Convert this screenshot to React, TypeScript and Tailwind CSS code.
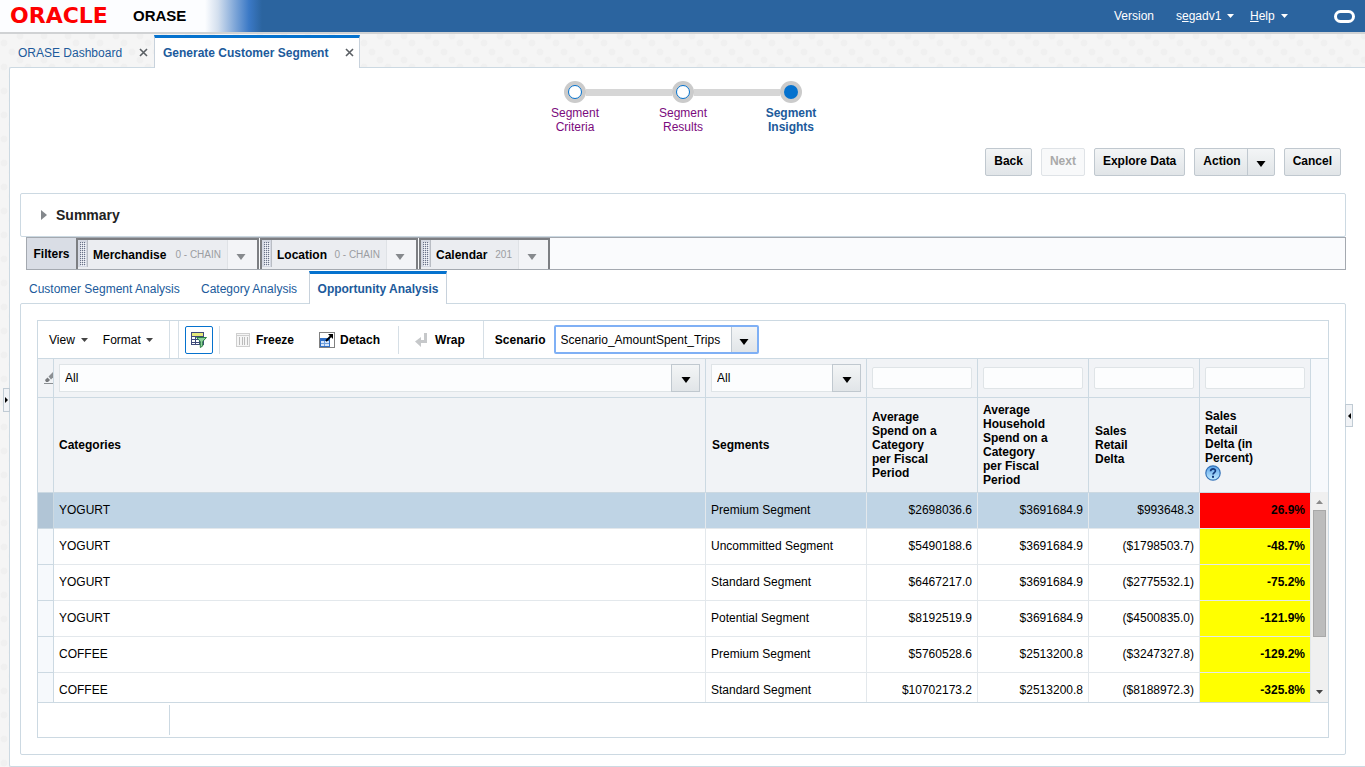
import React from 'react';

interface Row {
  category: string;
  segment: string;
  spend: string;
  household: string;
  delta: string;
  percent: string;
}

const rows: Row[] = [
  { category: 'YOGURT', segment: 'Premium Segment', spend: '$2698036.6', household: '$3691684.9', delta: '$993648.3', percent: '26.9%' },
  { category: 'YOGURT', segment: 'Uncommitted Segment', spend: '$5490188.6', household: '$3691684.9', delta: '($1798503.7)', percent: '-48.7%' },
  { category: 'YOGURT', segment: 'Standard Segment', spend: '$6467217.0', household: '$3691684.9', delta: '($2775532.1)', percent: '-75.2%' },
  { category: 'YOGURT', segment: 'Potential Segment', spend: '$8192519.9', household: '$3691684.9', delta: '($4500835.0)', percent: '-121.9%' },
  { category: 'COFFEE', segment: 'Premium Segment', spend: '$5760528.6', household: '$2513200.8', delta: '($3247327.8)', percent: '-129.2%' },
  { category: 'COFFEE', segment: 'Standard Segment', spend: '$10702173.2', household: '$2513200.8', delta: '($8188972.3)', percent: '-325.8%' },
];

const Caret = ({ className = 'text-black' }: { className?: string }) => (
  <svg width="10" height="6" viewBox="0 0 10 6" className={className} aria-hidden="true">
    <path d="M.5 0h9L5 6z" fill="currentColor" />
  </svg>
);

const SmallCaret = ({ className = 'text-[#444]' }: { className?: string }) => (
  <svg width="7" height="4" viewBox="0 0 7 4" className={className} aria-hidden="true">
    <path d="M0 0h7L3.5 4z" fill="currentColor" />
  </svg>
);

const CloseIcon = () => (
  <svg width="9" height="9" viewBox="0 0 9 9" aria-hidden="true">
    <path d="M1 1l7 7M8 1L1 8" stroke="#5a5f64" strokeWidth="1.6" />
  </svg>
);

const TopBar = () => (
  <header className="flex h-[34px] items-center border-b-2 border-[#d0d2d4] bg-[linear-gradient(90deg,#fcfdff_0,#fcfdff_205px,#d3dfee_218px,#7ea6d8_235px,#3b79c6_249px,#2b649f_262px)]">
    <span className="w-[133px] pl-2.5 font-['DejaVu_Sans',sans-serif] text-[22px] leading-6 font-bold text-[#fe0000]">
      ORACLE
    </span>
    <h1 className="text-[15px] font-bold text-black">ORASE</h1>
    <nav className="ml-auto flex items-center pr-2.5 text-white">
      <a href="#version" className="w-[62px]">Version</a>
      <button className="flex w-[74px] items-center gap-1.5">
        <span>s<u>e</u>gadv1</span>
        <SmallCaret className="text-white" />
      </button>
      <button className="flex w-[84px] items-center gap-1.5">
        <span><u>H</u>elp</span>
        <SmallCaret className="text-white" />
      </button>
      <svg width="21" height="13" viewBox="0 0 21 13" aria-hidden="true">
        <rect x="1.5" y="1.5" width="18" height="10" rx="5" fill="none" stroke="#fff" strokeWidth="3" />
      </svg>
    </nav>
  </header>
);

const PageTabs = () => (
  <div className="relative z-10 -mb-px flex h-[34px] items-end pl-[9px] text-[#205a9b]">
    <div className="flex h-[33px] w-[145px] items-center justify-between pt-0.5 pr-1.5 pl-[9px]">
      <a href="#dashboard">ORASE Dashboard</a>
      <button aria-label="Close ORASE Dashboard"><CloseIcon /></button>
    </div>
    <div className="flex h-[33px] w-[206px] items-center justify-between border-x border-t-3 border-x-[#c8d2dc] border-t-[#0572ce] bg-white pr-[5px] pb-px pl-2 font-bold">
      <a href="#segment">Generate Customer Segment</a>
      <button aria-label="Close Generate Customer Segment"><CloseIcon /></button>
    </div>
  </div>
);

const steps = [
  { lines: ['Segment', 'Criteria'], current: false },
  { lines: ['Segment', 'Results'], current: false },
  { lines: ['Segment', 'Insights'], current: true },
];

const Train = () => (
  <ol className="flex justify-center">
    {steps.map((step, i) => (
      <li key={step.lines[1]} className="w-[108px]">
        <div className="flex items-center">
          <span className={i === 0 ? 'h-[7px] flex-1' : 'h-[7px] flex-1 bg-[#d6d6d6]'} />
          <span className="flex size-[22px] items-center justify-center rounded-full bg-[#cbcbcb]">
            <span
              className={
                step.current
                  ? 'size-3.5 rounded-full bg-[#0572ce]'
                  : 'size-3.5 rounded-full border border-[#0572ce] bg-white'
              }
            />
          </span>
          <span className={i === 2 ? 'h-[7px] flex-1' : 'h-[7px] flex-1 bg-[#d6d6d6]'} />
        </div>
        <a
          href="#step"
          className={
            step.current
              ? 'mt-[3px] block text-center leading-[14px] font-bold text-[#205a9b]'
              : 'mt-[3px] block text-center leading-[14px] text-[#7b0a7d]'
          }
        >
          {step.lines[0]}
          <br />
          {step.lines[1]}
        </a>
      </li>
    ))}
  </ol>
);

const buttonStyle =
  'h-7 rounded-xs border border-[#c0c8cf] bg-linear-to-b from-[#f3f5f6] to-[#e1e5e8] px-2 pb-0.5 font-bold text-black';

const ActionButtons = () => (
  <div className="mt-3.5 flex justify-end gap-[9px] pr-[5px]">
    <button className={buttonStyle}>Back</button>
    <button
      disabled
      className="h-7 rounded-xs border border-[#dfe3e7] bg-[#f8f9fa] px-2 pb-0.5 font-bold text-[#a9a9a9]"
    >
      Next
    </button>
    <button className={buttonStyle}>Explore Data</button>
    <div className="flex h-7 rounded-xs border border-[#c0c8cf] bg-linear-to-b from-[#f3f5f6] to-[#e1e5e8]">
      <button className="border-r border-[#c0c8cf] pr-1.5 pb-0.5 pl-2 font-bold text-black">Action</button>
      <button aria-label="More actions" className="flex w-[26px] items-center justify-center pt-1"><Caret /></button>
    </div>
    <button className={buttonStyle}>Cancel</button>
  </div>
);

const filters = [
  { name: 'Merchandise', value: '0 - CHAIN', width: 'w-[183px]' },
  { name: 'Location', value: '0 - CHAIN', width: 'w-[158px]' },
  { name: 'Calendar', value: '201', width: 'w-[131px]' },
];

const FilterBar = () => (
  <div className="ml-1.5 flex h-[33px] border border-[#a4a9b0] bg-[#fafbfd]">
    <span className="flex w-[49px] items-center justify-center bg-[#d9dde5] font-bold text-black">Filters</span>
    {filters.map((f) => (
      <div
        key={f.name}
        className={`${f.width} mr-px flex border-t-2 border-r-2 border-l-2 border-[#7c7e82] bg-[#ebedf1]`}
      >
        <span className="mr-[5px] flex h-[27px] w-[10px] shrink-0 items-center justify-center border-r border-[#b9bdc4] bg-[#d5d9e3]">
          <svg width="6" height="24" aria-hidden="true">
            <defs>
              <pattern id={`grip-${f.name}`} width="2" height="2" patternUnits="userSpaceOnUse">
                <rect width="1" height="1" fill="#6b7388" />
                <rect x="1" y="1" width="1" height="1" fill="#f4f6fa" />
              </pattern>
            </defs>
            <rect width="6" height="24" fill={`url(#grip-${f.name})`} />
          </svg>
        </span>
        <span className="flex items-center text-[12px] font-bold text-black">{f.name}</span>
        <span className="ml-auto flex items-center pr-1.5 text-[10px] text-[#9b9da1]">{f.value}</span>
        <button
          aria-label={`Choose ${f.name}`}
          className="flex w-[30px] shrink-0 items-center justify-center border-l border-[#dfe2e6] bg-[#f3f4f7] pt-1 pr-1"
        >
          <Caret className="text-[#86898d]" />
        </button>
      </div>
    ))}
  </div>
);

const AnalysisTabs = () => (
  <div className="relative z-10 -mb-px flex h-[34px] items-end text-[#205a9b]">
    <a href="#customer" className="flex h-[31px] w-[172px] items-center pl-[9px]">Customer Segment Analysis</a>
    <a href="#category" className="flex h-[31px] w-[117px] items-center pl-[9px]">Category Analysis</a>
    <a
      href="#opportunity"
      className="flex h-[33px] w-[138px] items-center justify-center border-x border-t-3 border-x-[#c8d2dc] border-t-[#0572ce] bg-white font-bold"
    >
      Opportunity Analysis
    </a>
  </div>
);

const QueryIcon = () => (
  <svg width="16" height="16" viewBox="0 0 16 16" aria-hidden="true">
    <rect x=".5" y=".5" width="12" height="12" fill="#fff" stroke="#3f4a7a" />
    <rect x="1" y="1" width="11" height="3" fill="#e6e97a" />
    <path d="M1 4.5h11M1 7.5h11M1 10.5h11M4.5 4v9M8.500 4v9" stroke="#3f4a7a" />
    <path d="M5.500 5.500h10l-3.800 4v4.500l-2.400 1.500v-6z" fill="#8fd09b" stroke="#2c8044" />
  </svg>
);

const FreezeIcon = () => (
  <svg width="14" height="14" viewBox="0 0 14 14" aria-hidden="true">
    <rect x=".5" y=".5" width="13" height="13" fill="#f5f5f5" stroke="#cfcfcf" />
    <path d="M1 2.5h12" stroke="#cfcfcf" />
    <path d="M3.5 4v8M6.500 4v8M8.500 4v8M11.500 4v8" stroke="#bbb" />
  </svg>
);

const DetachIcon = () => (
  <svg width="16" height="16" viewBox="0 0 16 16" aria-hidden="true">
    <rect x=".5" y=".5" width="15" height="15" fill="none" stroke="#000" strokeDasharray="1 1" />
    <rect x="1.500" y="6.500" width="9" height="8" fill="#d7e6fa" stroke="#2f6fc6" />
    <path d="M2 8h8" stroke="#2f6fc6" strokeWidth="2" />
    <path d="M5.500 9v5M2 11.500h8" stroke="#6fa0de" />
    <path d="M7 9l5.500-5.500" stroke="#000" strokeWidth="1.800" />
    <path d="M9 2h5v5z" fill="#000" />
  </svg>
);

const WrapIcon = () => (
  <svg width="13" height="14" viewBox="0 0 13 14" aria-hidden="true">
    <path d="M9 0h3v10H6v4L0 8.500 6 4v3h3z" fill="#c6c8ca" />
  </svg>
);

const Toolbar = () => (
  <div className="flex h-[37px] items-center text-black">
    <div className="flex h-full w-[132px] items-center gap-[15px] border-r border-[#d6dfe6] pl-[11px]">
      <button className="flex items-center gap-1.5">View <SmallCaret /></button>
      <button className="flex items-center gap-[5px]">Format <SmallCaret /></button>
    </div>
    <div className="flex h-full flex-1 items-center">
      <span className="ml-2 h-full border-l border-[#d6dfe6]" />
      <button
        aria-label="Query by example"
        className="ml-1.5 flex size-7 items-center justify-center rounded-xs border border-[#0572ce]"
      >
        <QueryIcon />
      </button>
      <span className="ml-1.5 h-7 border-l border-[#d6dfe6]" />
      <button className="ml-4 flex items-center gap-1.5 font-bold"><FreezeIcon /> Freeze</button>
      <button className="ml-[25px] flex items-center gap-[5px] font-bold"><DetachIcon /> Detach</button>
      <span className="ml-[18px] h-7 border-l border-[#d6dfe6]" />
      <button className="ml-4 flex items-center gap-[7px] font-bold"><WrapIcon /> Wrap</button>
      <span className="ml-[18px] h-full border-l border-[#d6dfe6]" />
      <label htmlFor="scenario" className="ml-[11px] font-bold">Scenario</label>
      <div className="relative ml-2">
        <select
          id="scenario"
          className="block h-[29px] w-[205px] appearance-none rounded-xs border-2 border-[#7fb0f5] bg-white pr-7 pl-[5px]"
        >
          <option>Scenario_AmountSpent_Trips</option>
        </select>
        <span className="pointer-events-none absolute inset-y-0.5 right-0.5 flex w-[26px] items-center justify-center border-l border-[#c0c8cf] bg-linear-to-b from-[#f3f5f6] to-[#e1e5e8] pt-1">
          <Caret />
        </span>
      </div>
    </div>
  </div>
);

const FilterSelect = ({ label }: { label: string }) => (
  <div className="relative">
    <select
      aria-label={label}
      className="block h-7 w-full appearance-none border border-[#dfe4e7] bg-[#fcfdfe] pr-8 pl-[5px] font-normal"
    >
      <option>All</option>
    </select>
    <span className="pointer-events-none absolute inset-y-0 right-0 flex w-[29px] items-center justify-center border border-[#c0c8cf] bg-linear-to-b from-[#f3f5f6] to-[#e1e5e8] pt-1">
      <Caret />
    </span>
  </div>
);

const FilterInput = ({ label }: { label: string }) => (
  <input
    type="text"
    aria-label={label}
    className="block h-[22px] w-full rounded-xs border border-[#dfe4e7] bg-[#fcfdfe] px-1 font-normal"
  />
);

const EraserIcon = () => (
  <svg width="9" height="12" viewBox="0 0 9 12" className="ml-auto" aria-hidden="true">
    <path d="M0 11.500h9" stroke="#8b8f93" />
    <path d="M1 8l2.500-2.500L6 8l-2 2H2z" fill="#77797c" />
    <path d="M4.500 4.500L9 0v5.500L7 7.500z" fill="#8b8f93" />
  </svg>
);

const HelpIcon = () => (
  <svg width="16" height="16" viewBox="0 0 16 16" aria-hidden="true">
    <defs>
      <linearGradient id="help" x1="0" y1="0" x2="0" y2="1">
        <stop offset="0" stopColor="#5aa2ea" />
        <stop offset="1" stopColor="#c3ecff" />
      </linearGradient>
    </defs>
    <circle cx="8" cy="8" r="7.200" fill="url(#help)" stroke="#3673b8" strokeWidth="1.200" />
    <path d="M5.600 6.200C5.600 3 10.600 3.200 10.400 6 10.300 7.600 8 7.600 8 9.600" fill="none" stroke="#12397c" strokeWidth="1.700" />
    <rect x="7" y="10.800" width="2" height="2" fill="#12397c" />
  </svg>
);

const headCell = 'border-r border-b border-[#ccd9e2] px-[5px] text-left';
const textHead = 'border-r border-b border-[#ccd9e2] px-1.5 text-left';
const textCell = 'border-r border-b border-[#e3e8ec] pb-0.5 pl-[5px]';
const numberCell = 'border-r border-b border-[#e3e8ec] pr-[5px] pb-0.5 text-right';

const DataTable = () => (
  <div className="flex h-[345px] overflow-hidden border-y border-[#ccd9e2]">
    <div className="min-w-0 flex-1 overflow-hidden">
      <table className="w-full table-fixed border-separate border-spacing-0 text-black">
        <colgroup>
          <col className="w-4" />
          <col />
          <col className="w-[161px]" />
          <col className="w-[111px]" />
          <col className="w-[111px]" />
          <col className="w-[111px]" />
          <col className="w-[111px]" />
        </colgroup>
        <thead className="bg-[#f1f3f6] leading-[14px]">
          <tr className="h-[39px]">
            <td className="border-r border-b border-[#ccd9e2]"><EraserIcon /></td>
            <td className={headCell}><FilterSelect label="Filter categories" /></td>
            <td className={headCell}><FilterSelect label="Filter segments" /></td>
            <td className={headCell}><FilterInput label="Filter average spend" /></td>
            <td className={headCell}><FilterInput label="Filter average household spend" /></td>
            <td className={headCell}><FilterInput label="Filter sales retail delta" /></td>
            <td className={headCell}><FilterInput label="Filter sales retail delta percent" /></td>
          </tr>
          <tr className="h-[95px]">
            <td className="border-r border-b border-[#ccd9e2]" />
            <th className={headCell}>Categories</th>
            <th className={textHead}>Segments</th>
            <th className={headCell}>Average<br />Spend on a<br />Category<br />per Fiscal<br />Period</th>
            <th className={headCell}>Average<br />Household<br />Spend on a<br />Category<br />per Fiscal<br />Period</th>
            <th className={textHead}>Sales<br />Retail<br />Delta</th>
            <th className={headCell}>
              Sales<br />Retail<br />Delta (in<br />Percent)
              <HelpIcon />
            </th>
          </tr>
        </thead>
        <tbody>
          {rows.map((row, i) => (
            <tr key={i} className={i === 0 ? 'h-9 bg-[#bfd4e5]' : 'h-9 bg-white'}>
              <td className={i === 0 ? 'border-r border-b border-[#ccd9e2] bg-[#b1c5d6]' : 'border-r border-b border-[#ccd9e2] bg-[#f6f9fc]'} />
              <td className={textCell}>{row.category}</td>
              <td className={textCell}>{row.segment}</td>
              <td className={numberCell}>{row.spend}</td>
              <td className={numberCell}>{row.household}</td>
              <td className={numberCell}>{row.delta}</td>
              <td
                className={
                  i === 0
                    ? `${numberCell} bg-[#ff0000] font-bold`
                    : `${numberCell} bg-[#ffff00] font-bold`
                }
              >
                {row.percent}
              </td>
            </tr>
          ))}
        </tbody>
      </table>
    </div>
    <div className="flex w-[17px] flex-col bg-[#f0f0f0]">
      <div className="h-[133px] bg-[#f7f9fc]" />
      <div className="flex flex-1 flex-col items-center py-2">
        <SmallCaret className="rotate-180 text-[#8a8a8a]" />
        <div className="mt-1.5 h-[127px] w-[13px] border border-[#a8a8a8] bg-[#bcbcbc]" />
        <SmallCaret className="mt-auto text-[#444]" />
      </div>
    </div>
  </div>
);

const App = () => {
  return (
    <div className="flex min-h-screen flex-col bg-[#f5f5f5] bg-[radial-gradient(circle_at_4px_19px,#f0f0f0_3px,transparent_4px),radial-gradient(circle_at_12px_4px,#f0f0f0_3px,transparent_4px),radial-gradient(circle_at_20px_12px,#f0f0f0_3px,transparent_4px)] bg-[size:24px_24px] font-['Liberation_Sans',Arial,sans-serif] text-[12px] leading-4">
      <TopBar />
      <PageTabs />
      <main className="relative ml-[9px] flex-1 rounded-l-xs border-y border-l border-[#ccd9e2] bg-white pt-[13px] pr-[19px] pb-[11px] pl-2.5">
        <Train />
        <ActionButtons />

        <section className="mt-[17px] flex h-11 items-center rounded-xs border border-[#ccd9e2] pl-5">
          <button className="flex items-center gap-[9px] text-[14px] font-bold text-[#222]">
            <svg width="6" height="10" viewBox="0 0 6 10" aria-hidden="true">
              <path d="M0 0l6 5-6 5z" fill="#84888c" />
            </svg>
            Summary
          </button>
        </section>
        <FilterBar />
        <AnalysisTabs />

        <section className="rounded-xs border border-[#ccd9e2] p-4">
          <div className="border border-[#ccd9e2]">
            <Toolbar />
            <DataTable />
            <div className="flex h-[34px] py-0.5">
              <span className="w-[132px] border-r border-[#ccd9e2]" />
            </div>
          </div>
        </section>

        {/* splitter handles */}
        <button
          aria-label="Expand left panel"
          className="absolute top-80 -left-[7px] flex h-6 w-[7px] items-center justify-center border border-[#c0cbd4] bg-[#f1f3f6]"
        >
          <svg width="3" height="6" viewBox="0 0 3 6" aria-hidden="true"><path d="M0 0l3 3-3 3z" /></svg>
        </button>
        <button
          aria-label="Expand right panel"
          className="absolute top-[336px] right-3 flex h-[23px] w-2 items-center justify-center border border-[#c0cbd4] bg-[#f1f3f6]"
        >
          <svg width="3" height="6" viewBox="0 0 3 6" aria-hidden="true"><path d="M3 0L0 3l3 3z" /></svg>
        </button>
      </main>
    </div>
  );
};

export default App;
